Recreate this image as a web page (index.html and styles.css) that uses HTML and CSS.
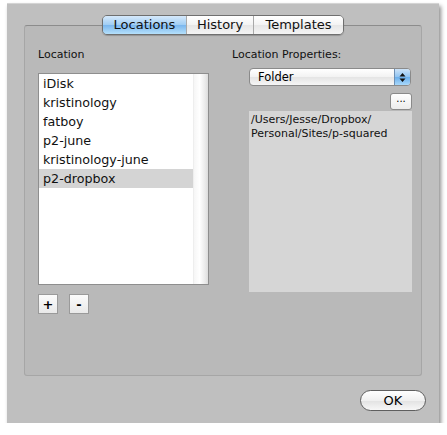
FILE: index.html
```html
<!DOCTYPE html>
<html>
<head>
<meta charset="utf-8">
<link rel="stylesheet" href="styles.css">
</head>
<body>
<div class="window">
  <div class="tabs">
    <div class="tab active">Locations</div>
    <div class="tab">History</div>
    <div class="tab last">Templates</div>
  </div>
  <div class="tabbox">
    <div class="col left">
      <div class="label">Location</div>
      <div class="list">
        <div class="rows">
          <div class="row">iDisk</div>
          <div class="row">kristinology</div>
          <div class="row">fatboy</div>
          <div class="row">p2-june</div>
          <div class="row">kristinology-june</div>
          <div class="row sel">p2-dropbox</div>
        </div>
        <div class="scroll"></div>
      </div>
      <div class="btns">
        <div class="sqbtn">+</div>
        <div class="sqbtn">-</div>
      </div>
    </div>
    <div class="col right">
      <div class="label">Location Properties:</div>
      <div class="props">
        <div class="popup">
          <span class="ptext">Folder</span>
          <span class="stepper">
            <svg width="7" height="11" viewBox="0 0 7 11"><path d="M3.5 1 L6.5 4.5 L0.5 4.5 Z M0.5 6.5 L6.5 6.5 L3.5 10 Z" fill="#111"/></svg>
          </span>
        </div>
        <div class="dotsrow"><div class="dots">...</div></div>
        <div class="path">/Users/Jesse/Dropbox/<br>Personal/Sites/p-squared</div>
      </div>
    </div>
  </div>
  <div class="footer">
    <div class="ok">OK</div>
  </div>
</div>
</body>
</html>
```
FILE: styles.css
```css
html, body { margin: 0; padding: 0; background: #fff; }
body { font-family: "DejaVu Sans", sans-serif; color: #000; }
.window {
  margin: 3px 0 0 7px;
  width: 432px;
  height: 420px;
  box-sizing: border-box;
  background: #bfbfbf;
  border-top: 1px solid #d4d4d4;
  box-shadow: 2px 3px 4px rgba(0,0,0,0.45);
  padding: 11px 17px 0 17px;
  display: flex;
  flex-direction: column;
}
.tabs {
  align-self: center;
  display: flex;
  height: 20px;
  box-sizing: border-box;
  border: 1px solid #6f6f6f;
  border-radius: 5px;
  overflow: hidden;
  position: relative;
  z-index: 1;
  box-shadow: 0 1px 1px rgba(0,0,0,0.2);
}
.tab {
  font-size: 13px;
  line-height: 18px;
  background: linear-gradient(#ffffff, #f3f3f3 50%, #e6e6e6 51%, #f4f4f4);
  border-left: 1px solid #a9a9a9;
  box-sizing: border-box;
  text-align: center;
  color: #111;
}
.tab:first-child { border-left: none; }
.tab.active {
  width: 83px;
  background: linear-gradient(#d6e9fb, #9fcdf4 50%, #7ab6ee 51%, #b5e0fb);
}
.tab:nth-child(2) { width: 67px; }
.tab.last { width: 90px; }
.tabbox {
  margin-top: -10px;
  height: 351px;
  box-sizing: border-box;
  background: #b9b9b9;
  border: 1px solid #a6a6a6;
  border-top-color: #8c8c8c;
  border-radius: 3px;
  display: flex;
  padding: 22px 0 0 13px;
}
.col { display: flex; flex-direction: column; }
.left { width: 194px; }
.label { font-size: 11px; line-height: 14px; height: 14px; color: #111; }
.list {
  margin-top: 11px;
  width: 171px;
  height: 212px;
  box-sizing: border-box;
  border: 1px solid #8e8e8e;
  background: #fff;
  display: flex;
}
.rows { flex: 1; padding-top: 0; }
.row {
  font-size: 12.7px;
  height: 19px;
  line-height: 19px;
  padding-left: 4px;
  color: #111;
}
.row.sel { background: #d4d4d4; }
.scroll {
  width: 14px;
  background: linear-gradient(90deg, #f6f6f6, #ffffff 40%, #eaeaea 80%, #dcdcdc);
  border-left: 1px solid #eeeeee;
}
.btns { display: flex; gap: 11px; margin-top: 9px; }
.sqbtn {
  width: 20px; height: 20px; box-sizing: border-box;
  border: 1px solid #9a9a9a;
  background: linear-gradient(#fbfbfb, #e9e9e9);
  font-size: 13px; line-height: 19px; text-align: center;
  font-weight: bold;
}
.right { width: 180px; }
.props { padding-left: 17px; display: flex; flex-direction: column; }
.popup {
  margin-top: 6px;
  height: 18px;
  width: 162px;
  box-sizing: border-box;
  border: 1px solid #8a8a8a;
  border-radius: 4px;
  background: linear-gradient(#ffffff, #f2f2f2 50%, #e4e4e4 51%, #f6f6f6);
  display: flex;
  overflow: hidden;
}
.ptext { flex: 1; font-size: 11.5px; line-height: 16px; padding-left: 8px; }
.stepper {
  width: 15px;
  background: linear-gradient(#cde3f8, #8ec3f1 50%, #6aaeeb 51%, #a8d8fa);
  border-left: 1px solid #6d8fb3;
  display: flex; align-items: center; justify-content: center;
}
.dotsrow { display: flex; justify-content: flex-end; margin-top: 7px; }
.dots {
  width: 22px; height: 17px; box-sizing: border-box;
  border: 1px solid #8a8a8a; border-radius: 3px;
  background: linear-gradient(#ffffff, #ececec);
  font-size: 10px; line-height: 10px; text-align: center;
}
.path {
  margin-top: 1px;
  width: 163px;
  height: 181px;
  box-sizing: border-box;
  background: #d6d6d6;
  font-size: 11px;
  line-height: 14px;
  padding: 2px 0 0 2px;
  color: #111;
}
.footer { display: flex; justify-content: flex-end; padding: 14px 0 0 0; }
.ok {
  width: 66px; height: 21px; box-sizing: border-box;
  margin-right: -4px;
  border: 1px solid #5f5f5f;
  border-radius: 11px;
  background: linear-gradient(#ffffff, #f0f0f0 50%, #e2e2e2 51%, #f7f7f7);
  font-size: 13px; line-height: 19px; text-align: center;
}
```
